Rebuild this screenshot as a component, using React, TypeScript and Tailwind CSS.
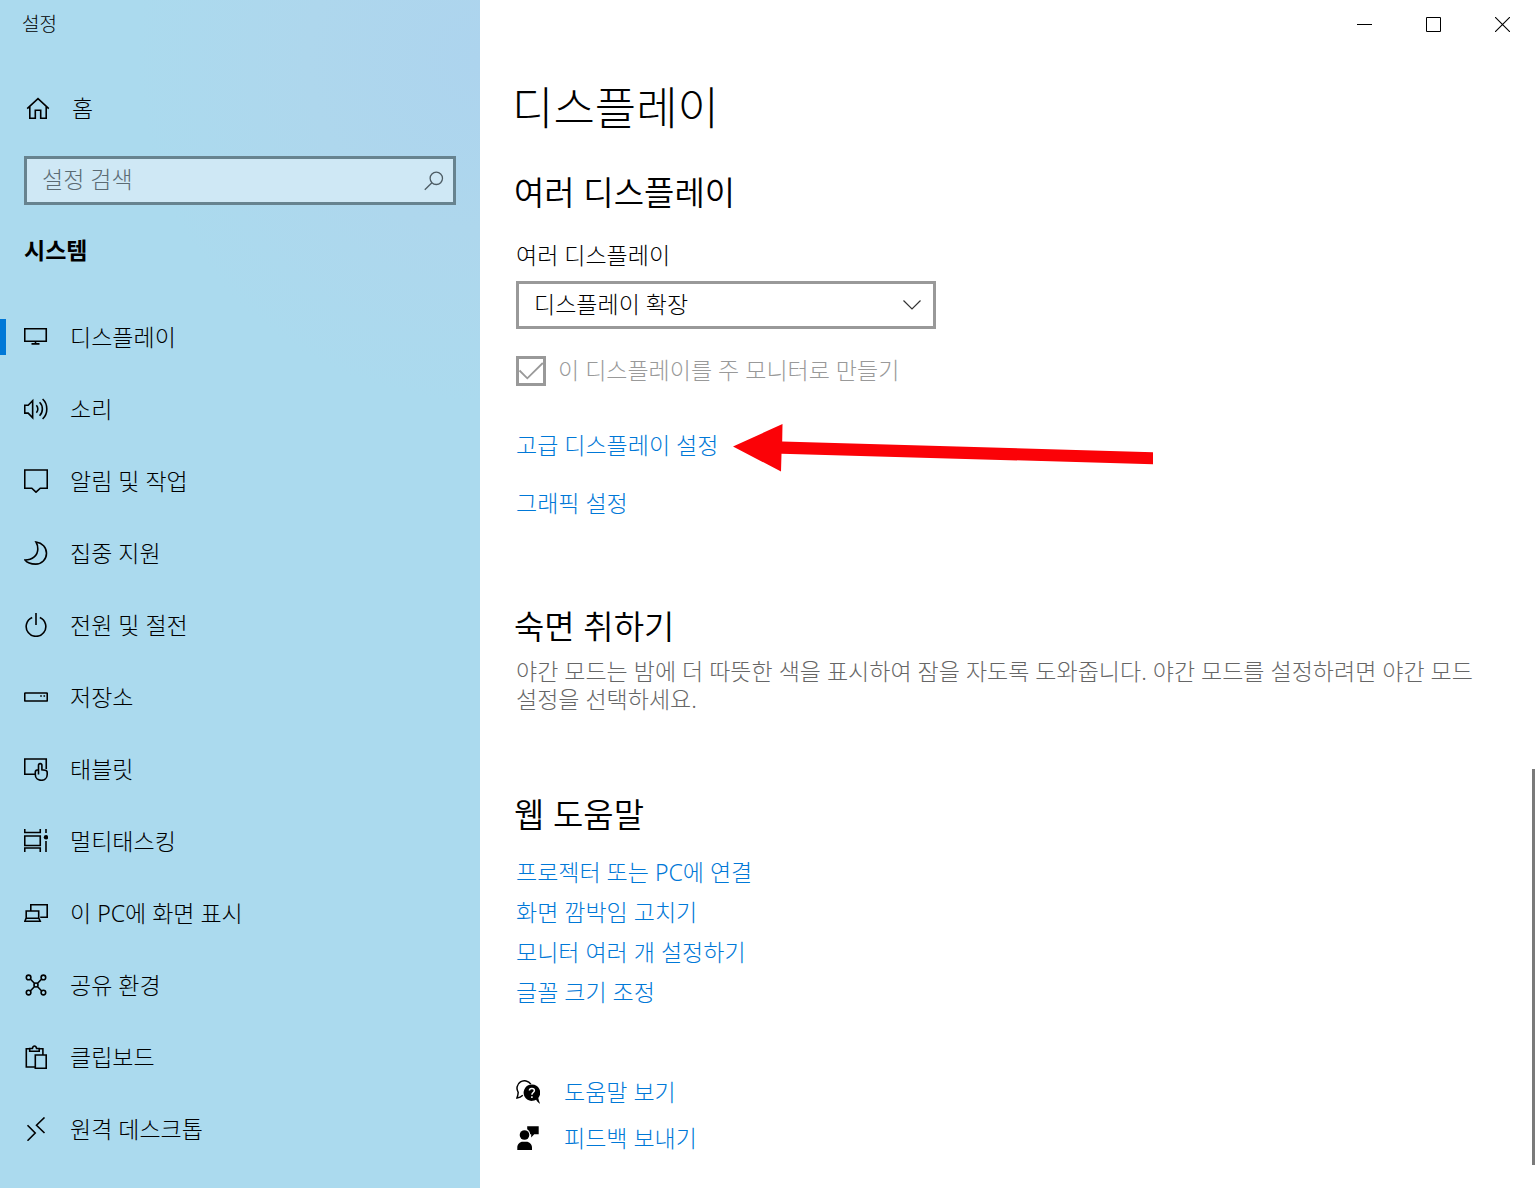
import type { ReactNode } from 'react';

const Icon = ({ children }: { children: ReactNode }) => (
  <svg
    viewBox="0 0 24 24"
    className="h-6 w-6 shrink-0"
    fill="none"
    stroke="currentColor"
    strokeWidth="1.6"
    aria-hidden="true"
  >
    {children}
  </svg>
);

const navItems = [
  {
    label: '디스플레이',
    icon: <path d="M.75 3.75h21.5v12.5H.75zM11.5 16.5V19M7.5 18.9h8" />,
  },
  {
    label: '소리',
    icon: (
      <path d="M.75 8.3h3.4l4.5-4.6v17l-4.5-4.6H.75zM12.4 8.2c1.9 2 1.9 5.6 0 7.6M15.6 5.2c3.7 3.6 3.7 10 0 13.6M18.6 2c5.6 5 5.6 15 0 20" />
    ),
  },
  {
    label: '알림 및 작업',
    icon: <path d="M.75 1h22.5v18.2h-7L12 23.2l-4.2-4H.75z" />,
  },
  {
    label: '집중 지원',
    icon: <path d="M12 1c6.3.8 10.5 5.5 10.5 11.3 0 6-4.8 10.8-10.8 10.8C7 23.1 3 21.6 1 19c7.5 0 12.8-4.5 12.8-11 0-2.7-.6-5-1.8-7z" />,
  },
  {
    label: '전원 및 절전',
    icon: <path d="M12 0v12M8.2 4.5a9.8 9.8 0 1 0 7.6 0" />,
  },
  {
    label: '저장소',
    icon: (
      <>
        <rect x=".75" y="8" width="22.5" height="8" rx=".5" />
        <path d="M16.2 11h1.6M19.5 11h1.6" />
      </>
    ),
  },
  {
    label: '태블릿',
    icon: (
      <path d="M10.5 17.2H.75V2h21.5v10M14.5 17.5V8.3a1.7 1.7 0 0 1 3.4 0v4.5l3.3.5c1.3.2 2 1 2 2.2v2c0 3.4-2.6 5.8-6 5.8s-5.9-2.3-5.9-5.7v-2.5c0-1.3 1.2-2.2 3.2-2.3" />
    ),
  },
  {
    label: '멀티태스킹',
    icon: (
      <>
        <path d="M.75 0v3.5h15.5V0M.75 7h15.5v9.5H.75zM.75 23v-4h15.5v4M22 0v4M22 12v11" />
        <circle cx="22" cy="8.3" r="2.2" fill="currentColor" stroke="none" />
      </>
    ),
  },
  {
    label: '이 PC에 화면 표시',
    icon: <path d="M6.8 9.5V3.8h16.4v12.5h-7M2.2 10h12.5v7.3H2.2zM2 17.5L.8 20.3h15.4L15 17.5" />,
  },
  {
    label: '공유 환경',
    icon: (
      <>
        <path d="M6.3 6l4.3 4.5M17.7 6l-4.3 4.5M6.3 18l4.3-4.5M17.7 18l-4.3-4.5" />
        <circle cx="4.6" cy="4.4" r="2.3" />
        <circle cx="19.4" cy="4.4" r="2.3" />
        <circle cx="4.6" cy="19.6" r="2.3" />
        <circle cx="19.4" cy="19.6" r="2.3" />
        <circle cx="12" cy="12" r="2" />
      </>
    ),
  },
  {
    label: '클립보드',
    icon: (
      <path d="M11 22H2.3V3.7h3.4M15.2 3.7h3.7v6M5.7 3.5h2.7c.3-1.5 1-2.5 2.1-2.5s1.8 1 2.1 2.5h2.6v2.8H5.7zM11.3 10h10.9v13.2H11.3z" />
    ),
  },
  {
    label: '원격 데스크톱',
    icon: <path d="M3.5 8.3l7.7 7.7-7.7 7.7M20.5.5L12.5 8.3l8 7.7" />,
  },
];

const webHelp = ['프로젝터 또는 PC에 연결', '화면 깜박임 고치기', '모니터 여러 개 설정하기', '글꼴 크기 조정'];

const linkClass = 'text-[#0078d7] hover:text-gray-500';
const headingClass = '-ml-0.5 text-[33px] leading-[44px] font-[350]';

const Sidebar = () => (
  <aside className="w-[480px] shrink-0 bg-[#abdaee] bg-[radial-gradient(circle_at_100%_5%,#add4ee_0%,#aed7ed_14%,#abdaee_28%)]">
    <div className="flex h-12 items-center px-[22px] text-[19px]">설정</div>

    <a href="#home" className="mt-6 flex h-[72px] items-center gap-[22px] px-[26px]">
      <Icon>
        <path d="M1.2 12.6L12 2.7l10.8 9.9M3.8 10.5v11.7h5.5v-8h5.4v8h5.5V10.5" />
      </Icon>
      홈
    </a>

    <div className="relative mx-6 mt-3">
      <input
        type="search"
        aria-label="설정 검색"
        placeholder="설정 검색"
        className="block h-[49px] w-full rounded-none border-3 border-[#67838f] bg-[#cfe8f5] pr-12 pb-1 pl-[15px] outline-none placeholder:text-[#5b6b73]"
      />
      <svg
        viewBox="0 0 20 20"
        className="pointer-events-none absolute top-[15px] right-3 h-5 w-5"
        fill="none"
        stroke="#4d5c64"
        strokeWidth="1.3"
        aria-hidden="true"
      >
        <circle cx="12.3" cy="7.3" r="6.2" />
        <path d="M7.9 11.7L.8 18.8" />
      </svg>
    </div>

    <h2 className="mt-[23px] px-6 leading-[44px] font-bold">시스템</h2>

    <nav className="mt-[29px] pb-5">
      {navItems.map((item, i) => (
        <a key={item.label} href="#settings" className="flex h-[72px] items-center">
          <span className={i === 0 ? 'h-9 w-[6px] bg-[#0078d7]' : 'h-9 w-[6px]'} />
          <span className="flex items-center gap-[22px] pl-[18px]">
            <Icon>{item.icon}</Icon>
            {item.label}
          </span>
        </a>
      ))}
    </nav>
  </aside>
);

const WindowControls = () => (
  <div className="flex h-12 justify-end pr-px">
    <button type="button" aria-label="최소화" className="flex w-[69px] items-center justify-center hover:bg-gray-200">
      <svg viewBox="0 0 15 15" className="h-[15px] w-[15px]" stroke="#000" aria-hidden="true">
        <path d="M0 7.5h15" />
      </svg>
    </button>
    <button type="button" aria-label="최대화" className="flex w-[69px] items-center justify-center hover:bg-gray-200">
      <svg viewBox="0 0 15 15" className="h-[15px] w-[15px]" fill="none" stroke="#000" aria-hidden="true">
        <path d="M.5.5h14v14H.5z" />
      </svg>
    </button>
    <button type="button" aria-label="닫기" className="flex w-[69px] items-center justify-center hover:bg-red-500">
      <svg viewBox="0 0 15 15" className="h-[15px] w-[15px]" stroke="#000" strokeWidth="1.1" aria-hidden="true">
        <path d="M0 0l15 15M15 0L0 15" />
      </svg>
    </button>
  </div>
);

const App = () => {
  return (
    <div className="flex min-h-screen bg-white font-['Noto_Sans','Noto_Sans_CJK_KR',sans-serif] text-[23px] leading-7 font-light break-keep text-black">
      <Sidebar />

      <main className="relative min-w-0 flex-1">
        <WindowControls />

        <div className="pr-11 pb-6 pl-9">
          <h1 className="mt-[30px] -ml-1 text-[45px] leading-[60px]">디스플레이</h1>

          {/* Multiple displays */}
          <section>
            <h2 className={`mt-[33px] ${headingClass}`}>여러 디스플레이</h2>
            <label htmlFor="multi" className="mt-[26px] block">
              여러 디스플레이
            </label>
            <div className="relative mt-3 max-w-[420px]">
              <select
                id="multi"
                className="block h-12 w-full appearance-none rounded-none border-3 border-[#999] bg-white pr-12 pb-0.5 pl-[15px] outline-none"
              >
                <option>디스플레이 확장</option>
                <option>디스플레이 복제</option>
              </select>
              <svg
                viewBox="0 0 18 10"
                className="pointer-events-none absolute top-[19px] right-[15px] h-[10px] w-[18px]"
                fill="none"
                stroke="#333"
                strokeWidth="1.2"
                aria-hidden="true"
              >
                <path d="M.5.5L9 9l8.5-8.5" />
              </svg>
            </div>
            <label className="mt-[27px] flex gap-3 text-[#999]">
              <span className="relative h-[30px] w-[30px] shrink-0">
                <input
                  type="checkbox"
                  defaultChecked
                  disabled
                  className="block h-[30px] w-[30px] appearance-none border-3 border-[#999]"
                />
                <svg
                  viewBox="0 0 30 30"
                  className="pointer-events-none absolute inset-0 h-[30px] w-[30px]"
                  fill="none"
                  stroke="#999"
                  strokeWidth="1.8"
                  aria-hidden="true"
                >
                  <path d="M3.5 14.5l7.8 7.8L26.8 7" />
                </svg>
              </span>
              이 디스플레이를 주 모니터로 만들기
            </label>

            <div className="relative mt-[45px]">
              <a href="#advanced" className={linkClass}>
                고급 디스플레이 설정
              </a>
              <svg
                viewBox="0 0 420 48"
                className="pointer-events-none absolute -top-[7px] left-[217px] h-12 w-[420px]"
                fill="#fb0207"
                aria-hidden="true"
              >
                <path d="M0 22.5L49.5 0l-.3 17.5L420 28.2v12L48.5 29.8 48 47.5z" />
              </svg>
            </div>
            <div className="mt-[30px]">
              <a href="#graphics" className={linkClass}>
                그래픽 설정
              </a>
            </div>
          </section>

          {/* Night light */}
          <section>
            <h2 className={`mt-[88px] ${headingClass}`}>숙면 취하기</h2>
            <p className="mt-2 text-[#666]">
              야간 모드는 밤에 더 따뜻한 색을 표시하여 잠을 자도록 도와줍니다. 야간 모드를 설정하려면 야간 모드
              설정을 선택하세요.
            </p>
          </section>

          {/* Web help */}
          <section>
            <h2 className={`mt-20 ${headingClass}`}>웹 도움말</h2>
            <ul className="mt-[15px]">
              {webHelp.map((text) => (
                <li key={text} className="flex h-10 items-center">
                  <a href="#help" className={linkClass}>
                    {text}
                  </a>
                </li>
              ))}
            </ul>
          </section>

          <ul className="mt-[57px]">
            <li className="flex h-[46px] items-center gap-6">
              <svg viewBox="0 0 24 24" className="h-6 w-6 shrink-0" aria-hidden="true">
                <path
                  d="M14.8 4.2A7.4 7.4 0 1 0 2.2 12.3c-.1 2.2-.5 4-1.2 5.6 2.2-.3 4.2-1.2 5.8-2.7"
                  fill="none"
                  stroke="#000"
                  strokeWidth="1.5"
                />
                <path d="M15.8 4.5a8.2 8.2 0 1 0 4.3 15.2c1 1.8 2.3 3.2 4 4-.9-1.8-1.5-3.8-1.8-5.8A8.2 8.2 0 0 0 15.8 4.5z" />
                <path
                  d="M13.4 10.6c0-1.4 1-2.2 2.5-2.2s2.5.9 2.5 2.2c0 1.9-2.5 2-2.5 4.1M15.9 16.2v1.7"
                  fill="none"
                  stroke="#fff"
                  strokeWidth="1.5"
                />
              </svg>
              <a href="#get-help" className={linkClass}>
                도움말 보기
              </a>
            </li>
            <li className="flex h-[46px] items-center gap-6">
              <svg viewBox="0 0 24 24" className="h-6 w-6 shrink-0" aria-hidden="true">
                <circle cx="8.5" cy="9" r="4.8" />
                <path d="M1.3 24v-2.5c0-3.3 2.4-5.8 5.5-5.8h3.5c3.1 0 5.7 2.5 5.7 5.8V24zM11.2.3h11.5v8h-4.5l-3 3.2V8.3h-1C14 6 13 4.5 11.2 3.3z" />
              </svg>
              <a href="#feedback" className={linkClass}>
                피드백 보내기
              </a>
            </li>
          </ul>
        </div>

        {/* Overlay scrollbar */}
        <div className="absolute right-[3px] bottom-[23px] h-1/3 w-[3px] bg-[#7a7a7a]" />
      </main>
    </div>
  );
};

export default App;
